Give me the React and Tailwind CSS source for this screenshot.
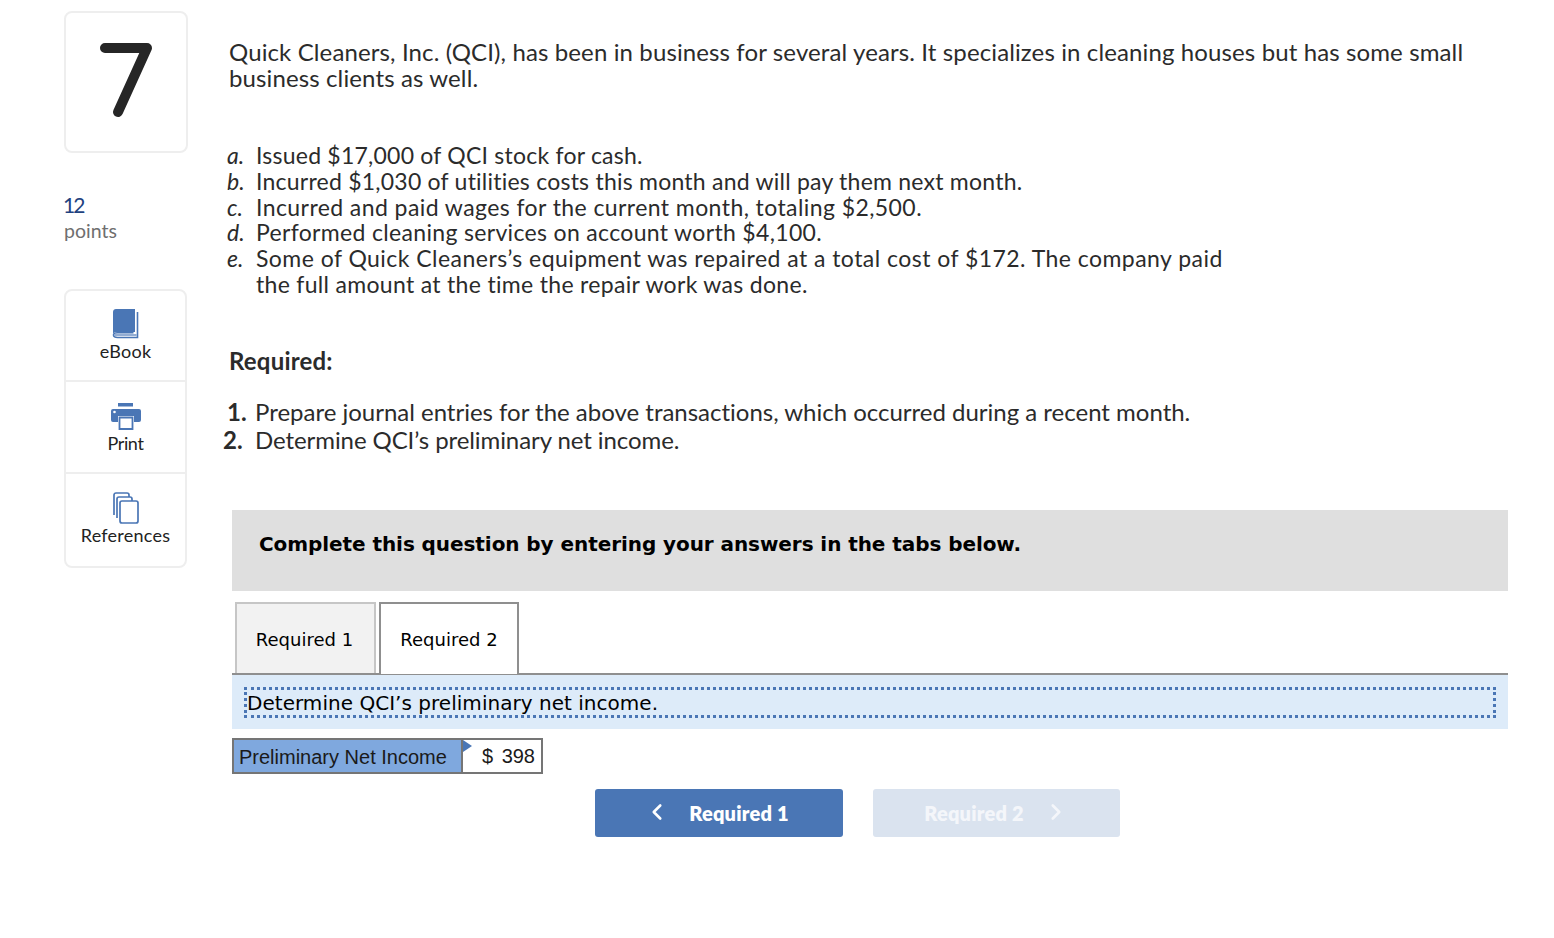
import React from "react";
import { ChevronLeft, ChevronRight } from "lucide-react";

const items = [
  { letter: "a.", lines: [["Issued $17,000 of QCI stock for cash.", "tracking-[0.23px]"]] },
  { letter: "b.", lines: [["Incurred $1,030 of utilities costs this month and will pay them next month.", "tracking-[0.23px]"]] },
  { letter: "c.", lines: [["Incurred and paid wages for the current month, totaling $2,500.", "tracking-[0.42px]"]] },
  { letter: "d.", lines: [["Performed cleaning services on account worth $4,100.", "tracking-[0.33px]"]] },
  {
    letter: "e.",
    lines: [
      ["Some of Quick Cleaners’s equipment was repaired at a total cost of $172. The company paid", "tracking-[0.46px]"],
      ["the full amount at the time the repair work was done.", "tracking-[0.31px]"],
    ],
  },
];

const BookIcon = () => (
  <svg width="28" height="32" viewBox="0 0 28 32" fill="none">
    <path d="M4 1h19v23H5c-2 0-3.500.6-4 1.600V4c0-1.800 1.300-3 3-3z" fill="#4a76b5" />
    <path d="M25.500 4v25.500H5.500C3 29.500 1.500 28.500 1.500 27s1.500-2.200 4-2.200h16" stroke="#4a76b5" strokeWidth="1.600" />
    <path d="M2.500 27h22" stroke="#4a76b5" strokeWidth="1.200" />
  </svg>
);

const PrintIcon = () => (
  <svg width="30" height="27" viewBox="0 0 30 27">
    <rect x="7" y="0" width="15" height="3.500" fill="#4a76b5" />
    <path d="M2 6h26a2 2 0 0 1 2 2v9a2 2 0 0 1-2 2h-5v-6H7v6H2a2 2 0 0 1-2-2V8a2 2 0 0 1 2-2z" fill="#4a76b5" />
    <circle cx="3.500" cy="9" r="1.300" fill="#fff" />
    <path d="M8.500 14.500h13V26h-13z" fill="#fff" stroke="#4a76b5" strokeWidth="1.800" />
  </svg>
);

const RefsIcon = () => (
  <svg width="28" height="32" viewBox="0 0 28 32" fill="none" stroke="#4a76b5" strokeWidth="1.700">
    <path d="M2 23V3a2 2 0 0 1 2-2h11a2 2 0 0 1 2 2v3" />
    <path d="M5 26V7a2 2 0 0 1 2-2h11a2 2 0 0 1 2 2v2" fill="#fff" />
    <rect x="8" y="9" width="18" height="22" rx="2" fill="#fff" />
  </svg>
);

const Tool = ({ icon, label, h, border, pt, gap, tracking }) => (
  <div className={`flex flex-col items-center ${h} ${pt} ${border}`}>
    {icon}
    <span className={`text-[18px] leading-5 text-[#222] ${tracking} ${gap}`}>{label}</span>
  </div>
);

export default function App() {
  return (
    <div
      className="w-[1554px] h-[938px] bg-white text-[#2b2b2b] flex overflow-hidden"
      style={{ fontFamily: '"Lato", "Liberation Sans", sans-serif' }}
    >
      <aside className="w-[229px] shrink-0 pl-[64px] pt-[11px]">
        <div className="w-[124px] h-[142px] border-2 border-[#eeeeee] rounded-[8px] flex items-center justify-center">
          <svg width="56" height="76" viewBox="0 0 56 76" fill="none" className="mt-[-2px]">
            <path d="M7 5h42L20 69" stroke="#262626" strokeWidth="10" strokeLinecap="round" strokeLinejoin="round" />
          </svg>
        </div>
        <div className="mt-[39px] -ml-[1px] text-[21px] leading-[26px] tracking-[-2px] text-[#1f4280]">12</div>
        <div className="text-[19.500px] leading-[25px] text-[#6f6f6f]">points</div>
        <div className="mt-[46px] w-[123px] h-[279px] border-2 border-[#eeeeee] rounded-[8px]">
          <Tool icon={<BookIcon />} label="eBook" h="h-[91px]" pt="pt-[17px]" gap="mt-[1px]" tracking="tracking-[0.25px]" border="border-b-2 border-[#eeeeee]" />
          <Tool icon={<PrintIcon />} label="Print" h="h-[92px]" pt="pt-[21px]" gap="mt-[3px]" tracking="tracking-[-0.4px]" border="border-b-2 border-[#eeeeee]" />
          <Tool icon={<RefsIcon />} label="References" h="h-[90px]" pt="pt-[18px]" gap="mt-[1px]" tracking="tracking-[0.25px]" border="" />
        </div>
      </aside>

      <main className="flex-1 pt-[39px] pr-[46px]">
        <p className="text-[24px] leading-[26px] tracking-[0.12px] max-w-[1250px]">
          Quick Cleaners, Inc. (QCI), has been in business for several years. It specializes in cleaning houses but has some small business clients as well.
        </p>

        <div className="mt-[52px] text-[23px] leading-[25.800px]">
          {items.map(({ letter, lines }) => (
            <div key={letter} className="flex">
              <i className="w-[27px] shrink-0 -ml-[2px] mr-[2px]">{letter}</i>
              <div>
                {lines.map(([text, tracking]) => (
                  <div key={text} className={`whitespace-nowrap ${tracking}`}>{text}</div>
                ))}
              </div>
            </div>
          ))}
        </div>

        <p className="mt-[50px] text-[24px] leading-[26px] tracking-[0.2px] font-bold">Required:</p>

        <div className="mt-[24px] text-[24px] leading-[28px]">
          <div className="flex">
            <b className="w-[26px] shrink-0 -ml-[2px] mr-[2px]">1.</b>
            <span className="tracking-[-0.01px]">Prepare journal entries for the above transactions, which occurred during a recent month.</span>
          </div>
          <div className="flex">
            <b className="w-[32px] shrink-0 -ml-[6px]">2.</b>
            <span className="tracking-[-0.08px]">Determine QCI’s preliminary net income.</span>
          </div>
        </div>

        <div className="ml-[3px] mt-[56px]" style={{ fontFamily: '"DejaVu Sans", Verdana, sans-serif' }}>
          <div className="h-[81px] bg-[#dfdfdf] pl-[27px] pt-[21px] text-[20px] leading-[26px] tracking-[-0.07px] font-bold text-black">
            Complete this question by entering your answers in the tabs below.
          </div>

          <div className="mt-[11px] flex items-end gap-[3px] pl-[3px] border-b-2 border-[#8f8f8f] h-[73px]">
            <div className="w-[141px] h-[71px] pt-[2px] pr-[2px] bg-[#f2f2f2] border-2 border-b-0 border-[#c6c6c6] flex items-center justify-center text-[18px] text-black">
              Required 1
            </div>
            <div className="w-[140px] h-[72px] pt-[2px] -mb-[1px] bg-white border-2 border-b-0 border-[#8f8f8f] flex items-center justify-center text-[18px] text-black">
              Required 2
            </div>
          </div>

          <div className="h-[54px] bg-[#ddebf9] px-[12px] pt-[12px]">
            <div className="h-[31px] border-[3px] border-dotted border-[#4a76b5] text-[20px] leading-[26px] tracking-[0.03px] text-black whitespace-nowrap">
              Determine QCI’s preliminary net income.
            </div>
          </div>

          <div
            className="mt-[9px] w-[311px] h-[36px] flex border-2 border-[#757575] text-[20px] text-[#1a1a1a]"
            style={{ fontFamily: '"Liberation Sans", Arial, sans-serif' }}
          >
            <div className="w-[229px] bg-[#7fa8de] border-r-2 border-[#757575] pl-[5px] leading-[34px] whitespace-nowrap">
              Preliminary Net Income
            </div>
            <div className="relative flex-1 flex justify-between pl-[19px] pr-[6px] leading-[33px]">
              <span className="absolute left-0 top-0 w-0 h-0 border-y-[6px] border-y-transparent border-l-[9px] border-l-[#4a76b5]" />
              <span>$</span>
              <span>398</span>
            </div>
          </div>

          <div className="mt-[15px] ml-[363px] flex gap-[30px]" style={{ fontFamily: '"Lato", sans-serif' }}>
            <button className="w-[248px] h-[48px] pr-[5px] bg-[#4a76b5] rounded-[3px] flex items-center justify-center text-white text-[20px] tracking-[0.2px] font-extrabold">
              <ChevronLeft size={26} strokeWidth={2.400} className="mr-[19px] -mt-[2px]" />
              Required 1
            </button>
            <button className="w-[247px] h-[48px] bg-[#dae3ef] rounded-[3px] flex items-center justify-center text-[#f4f6fa] text-[20px] tracking-[0.2px] font-extrabold">
              Required 2
              <ChevronRight size={26} strokeWidth={2.400} className="ml-[19px] -mt-[2px]" />
            </button>
          </div>
        </div>
      </main>
    </div>
  );
}
